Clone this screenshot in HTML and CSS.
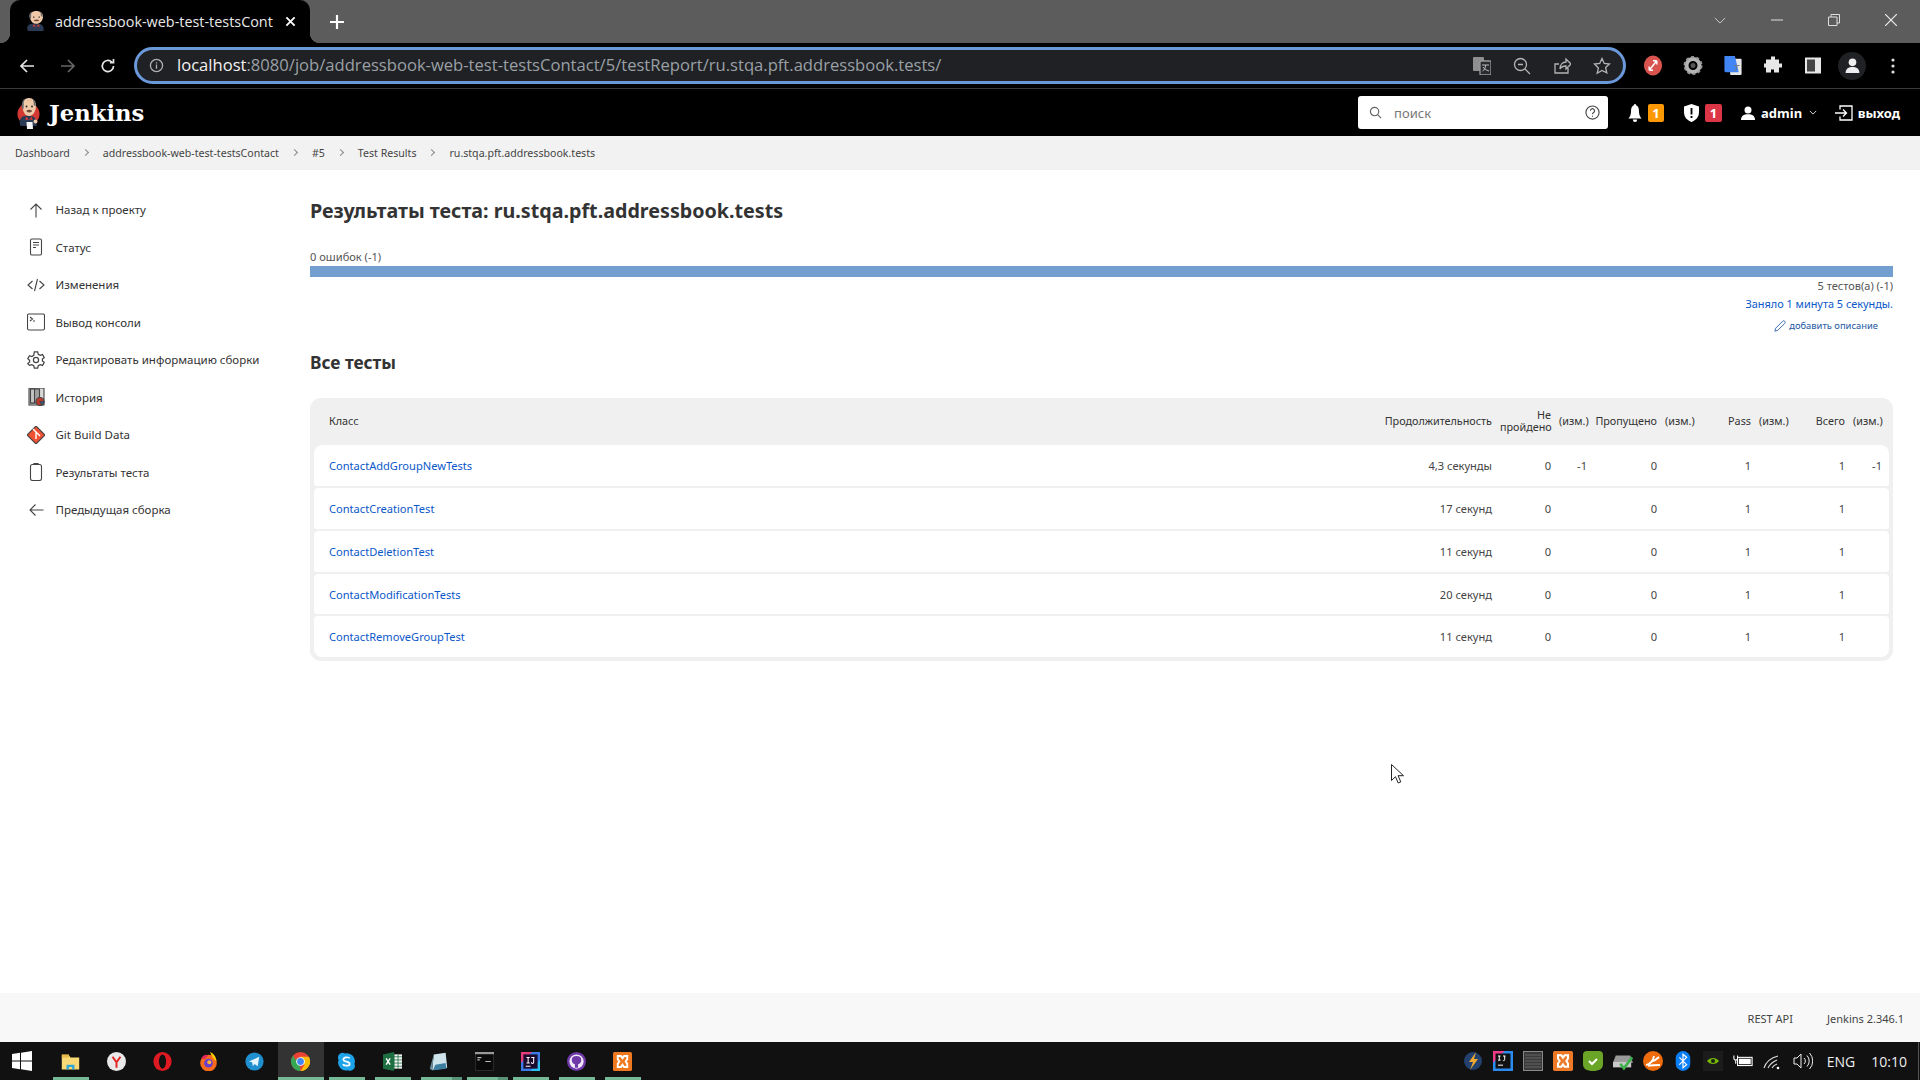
FILE: index.html
```html
<!DOCTYPE html>
<html lang="ru">
<head>
<meta charset="utf-8">
<title>addressbook-web-test-testsContact</title>
<link rel="stylesheet" href="styles.css">
</head>
<body>
<svg class="defs" width="0" height="0">
  <defs>
    <symbol id="butler" viewBox="0 0 23 32">
      <path d="M3.500 29C2 25 2.500 22 5 20c3-2 9-2 12 0 2.500 2 3 5 2.500 9z" fill="#2b3b55"/>
      <path d="M9 19.500l3 3 3-3 .5 3.500-3.500-.5-3.500.5z" fill="#d33833"/>
      <path d="M5.500 9.500C5 4 8 1 12 1s7 3 7 8c0 5-3 10-7 10s-6-4-6.500-9.500z" fill="#efc9a8"/>
      <path d="M5.500 12C4 8 5 3 8 1.800c-1 2-1.500 4-1.200 6.200l-.3 4zM18.500 9.500c.5-3-.5-6-3-7.500 1 2 1.500 4 1.200 6z" fill="#6f6c6e"/>
      <path d="M9 4c2-1.500 5-1.500 7 0-2-.5-5-.5-7 0z" fill="#e0b491"/>
      <path d="M9.500 13.500c1.500-1 4-1 5.500 0l-.5 1.500c-1.500.5-3 .5-4.500 0z" fill="#70483a"/>
      <circle cx="9.500" cy="9.500" r=".9" fill="#222"/><circle cx="15" cy="9.500" r=".9" fill="#222"/>
    </symbol>
  </defs>
</svg>

<div class="app">
  <div class="tabstrip">
    <div class="tab">
      <svg class="favicon" viewBox="2.500 1 17.500 28" preserveAspectRatio="none">
        <path d="M3.500 29C2 25 2.500 22 5 20c3-2 9-2 12 0 2.500 2 3 5 2.500 9z" fill="#2b3b55"/>
        <path d="M9 19.500l3 3 3-3 .5 3.500-3.500-.5-3.500.5z" fill="#d33833"/>
        <path d="M5.500 9.500C5 4 8 1 12 1s7 3 7 8c0 5-3 10-7 10s-6-4-6.500-9.500z" fill="#efc9a8"/>
        <path d="M5.500 12C4 8 5 3 8 1.800c-1 2-1.500 4-1.200 6.200l-.3 4zM18.500 9.500c.5-3-.5-6-3-7.500 1 2 1.500 4 1.200 6z" fill="#6f6c6e"/>
        <path d="M9.500 13.500c1.500-1 4-1 5.500 0l-.5 1.500c-1.500.5-3 .5-4.500 0z" fill="#70483a"/>
        <circle cx="9.500" cy="9.500" r=".9" fill="#222"/><circle cx="15" cy="9.500" r=".9" fill="#222"/>
      </svg>
      <span class="tab-title">addressbook-web-test-testsCont</span>
      <svg class="tab-x" viewBox="0 0 12 12"><path d="M1.500 1.500l9 9M10.500 1.500l-9 9"/></svg>
    </div>
    <svg class="tab-new" viewBox="0 0 14 14"><path d="M7 0v14M0 7h14"/></svg>
    <div class="win-controls">
      <svg class="wc wc-drop" viewBox="0 0 14 8"><path d="M1 1l6 6 6-6"/></svg>
      <svg class="wc wc-min" viewBox="0 0 12 12"><path d="M0 6h12"/></svg>
      <svg class="wc wc-max" viewBox="0 0 12 12"><path d="M.5 3h8.500v8.500H.5zM3 3V.5h8.500V9H9"/></svg>
      <svg class="wc wc-close" viewBox="0 0 12 12"><path d="M0 0l12 12M12 0L0 12"/></svg>
    </div>
  </div>

  <div class="toolbar">
    <div class="nav-btns">
      <svg class="nav" viewBox="0 0 16 16"><path d="M15 8H2M8 2L2 8l6 6"/></svg>
      <svg class="nav nav-off" viewBox="0 0 16 16"><path d="M1 8h13M8 2l6 6-6 6"/></svg>
      <svg class="nav" viewBox="0 0 16 16"><path d="M13.500 8a5.600 5.600 0 1 1-1.700-4M13.500 1v3.600H9.900"/></svg>
    </div>
    <div class="omnibox">
      <svg class="info" viewBox="0 0 16 16"><circle cx="8" cy="8" r="6.500"/><path d="M8 7v4.500M8 4.500v1.300"/></svg>
      <span class="url"><span class="host">localhost</span>:8080/job/addressbook-web-test-testsContact/5/testReport/ru.stqa.pft.addressbook.tests/</span>
      <div class="omni-actions">
        <svg class="oa" viewBox="0 0 18 18"><rect x="0" y="0" width="11" height="14" rx="1" fill="#8f8f8f" stroke="none"/><rect x="7" y="4" width="11" height="14" rx="1" fill="#2a2b2e" stroke="#9a9a9a"/><path d="M9 8h7M12.500 8c0 3-1 5-3 6M10 10c1 2 3 3 6 4" stroke="#bbb" stroke-width="1"/></svg>
        <svg class="oa" viewBox="0 0 18 18"><circle cx="7.500" cy="7.500" r="6"/><path d="M5 7.500h5M12 12l5 5"/></svg>
        <svg class="oa" viewBox="0 0 18 18"><path d="M15 11v5H2V7h4M7 12c0-5 3-7 6-7V2l5 5-5 5V9c-3 0-5 1-6 3z"/></svg>
        <svg class="oa" viewBox="0 0 18 18"><path d="M9 1.500l2.300 5 5.200.5-3.900 3.500 1.200 5.300L9 13.500l-4.800 2.800 1.200-5.300L1.500 7l5.200-.5z"/></svg>
      </div>
    </div>
    <div class="extensions">
      <svg class="ext" viewBox="0 0 20 22"><ellipse cx="10" cy="11" rx="9.500" ry="10.500" fill="#d9534f"/><path d="M6 16L14 6M14 6h-4M14 6v4M6 16h4M6 16v-4" stroke="#fff" stroke-width="1.500" fill="none"/></svg>
      <svg class="ext" viewBox="0 0 20 20"><circle cx="10" cy="10" r="6.500" fill="none" stroke="#b5b5b5" stroke-width="4"/><circle cx="10" cy="10" r="8.500" fill="none" stroke="#9a9a9a" stroke-width="2" stroke-dasharray="3 2.400"/><circle cx="10" cy="10" r="2.500" fill="#555"/></svg>
      <svg class="ext" viewBox="0 0 20 22"><rect x="7" y="4" width="12" height="17" rx="1" fill="#e8e8e8"/><path d="M1 1h11l4 17H2.500A1.500 1.500 0 0 1 1 16.500z" fill="#4285f4"/><path d="M11 11h6M14 11c0 3-1 5-3 6" stroke="#777" fill="none"/></svg>
      <svg class="ext" viewBox="0 0 20 20"><path d="M8 1h4v3h4v4h3v4h-3v5h-5v-3H8v3H3v-5H1V8h2V4h5z" fill="#e8e8e8"/></svg>
      <svg class="ext" viewBox="0 0 20 20"><path d="M2 2h16v16H2z" fill="#e8e8e8"/><rect x="4" y="4" width="8" height="12" fill="#444"/></svg>
      <span class="avatar"><svg viewBox="0 0 16 16"><circle cx="8" cy="5" r="3.600" fill="#eee"/><path d="M1.500 15c0-4 3-5.500 6.500-5.500s6.500 1.500 6.500 5.500z" fill="#eee"/></svg></span>
      <svg class="kebab" viewBox="0 0 4 16"><circle cx="2" cy="2" r="1.600"/><circle cx="2" cy="8" r="1.600"/><circle cx="2" cy="14" r="1.600"/></svg>
    </div>
  </div>

  <header class="jk-header">
    <div class="brand">
      <svg class="brand-logo" viewBox="0 0 23 32">
        <circle cx="11.500" cy="17" r="11" fill="#d33833"/>
        <use href="#butler"/>
        <path d="M9.500 25h6l.5 7H10z" fill="#f5f5f5"/>
        <circle cx="18.500" cy="24.500" r="2" fill="#efc9a8"/>
      </svg>
      <span class="brand-name">Jenkins</span>
    </div>
    <div class="jk-right">
      <div class="search">
        <svg class="search-ic" viewBox="0 0 14 14"><circle cx="6" cy="6" r="4.500"/><path d="M9.500 9.500L13 13"/></svg>
        <span class="search-ph">поиск</span>
        <svg class="search-help" viewBox="0 0 16 16"><circle cx="8" cy="8" r="7"/><path d="M5.800 6.200a2.200 2.200 0 1 1 3.400 1.800c-.8.500-1.200 1-1.200 1.800M8 11.500v1"/></svg>
      </div>
      <div class="hd-item hd-bell">
        <svg class="hd-ic" viewBox="0 0 16 18" preserveAspectRatio="none"><path d="M8 0a1.200 1.200 0 0 1 1.200 1.300C11.500 2 12.500 4 12.500 6.500c0 4 1 6 3 8H.5c2-2 3-4 3-8C3.500 4 4.500 2 6.800 1.300A1.200 1.200 0 0 1 8 0zM5.500 15.500h5a2.500 2.500 0 0 1-5 0z"/></svg>
        <span class="badge badge-warn">1</span>
      </div>
      <div class="hd-item hd-shield">
        <svg class="hd-ic hd-ic-s" viewBox="0 0 16 18" preserveAspectRatio="none"><path fill-rule="evenodd" d="M8 0l8 2.500V8c0 5-3 8-8 10-5-2-8-5-8-10V2.500zM7 4v6.500h2V4zM7 12v2h2v-2z"/></svg>
        <span class="badge badge-danger">1</span>
      </div>
      <div class="hd-item hd-user">
        <svg class="hd-ic hd-ic-u" viewBox="0 0 16 16" preserveAspectRatio="none"><circle cx="8" cy="4.500" r="4"/><path d="M0 16c0-4.500 3-6.500 8-6.500s8 2 8 6.500z"/></svg>
        <span class="hd-text">admin</span>
        <svg class="hd-caret" viewBox="0 0 10 6"><path d="M1 1l4 4 4-4"/></svg>
      </div>
      <div class="hd-item hd-exit">
        <svg class="hd-exit-ic" viewBox="0 0 18 16"><path d="M5 4.500V1h12v14H5v-3.500M0 8h11M8 4.500L11.500 8 8 11.500"/></svg>
        <span class="hd-text">выход</span>
      </div>
    </div>
  </header>

  <nav class="crumbs">
    <span>Dashboard</span><i></i>
    <span>addressbook-web-test-testsContact</span><i></i>
    <span>#5</span><i></i>
    <span>Test Results</span><i></i>
    <span>ru.stqa.pft.addressbook.tests</span>
  </nav>

  <div class="body-row">
    <aside class="side">
      <a class="side-item"><svg class="si" viewBox="0 0 18 18"><path d="M9 16.500V3M3.500 8.500L9 3l5.500 5.500"/></svg>Назад к проекту</a>
      <a class="side-item"><svg class="si" viewBox="0 0 18 18"><rect x="3.500" y="1" width="11" height="16" rx="1.500"/><path d="M6 4.500h6M6 7h6M6 9.500h3"/></svg>Статус</a>
      <a class="side-item"><svg class="si" viewBox="0 0 18 18"><path d="M5.500 5L1 9l4.500 4M12.500 5L17 9l-4.500 4M10.500 3l-3 12"/></svg>Изменения</a>
      <a class="side-item"><svg class="si" viewBox="0 0 18 18"><rect x=".5" y="1" width="17" height="16" rx="1.500"/><path d="M3 4l2.500 2L3 8M6 8h2"/></svg>Вывод консоли</a>
      <a class="side-item"><svg class="si" viewBox="0 0 16 16"><path d="M6.500.8h3l.5 2.100 1.700 1 2.100-.7 1.500 2.600-1.600 1.400v1.600l1.600 1.400-1.500 2.600-2.100-.7-1.700 1-.5 2.100h-3l-.5-2.100-1.700-1-2.100.7L.7 11.200l1.600-1.400V8.200L.7 6.800 2.200 4.200l2.100.7 1.700-1z"/><circle cx="8" cy="8" r="2.300"/></svg>Редактировать информацию сборки</a>
      <a class="side-item"><svg class="si si-fill" viewBox="0 0 18 18"><rect x="2" y="0" width="15" height="17" fill="#d8d8d8"/><rect x="3.500" y="1" width="9" height="14" fill="#a0a0a0"/><rect x="3.500" y="1" width="4" height="14" fill="#c4c4c4"/><circle cx="13" cy="13.500" r="4" fill="#c0392b"/><path d="M13 13.500h4a4 4 0 0 1-2.300 3.600z" fill="#3c5f9e"/></svg>История</a>
      <a class="side-item"><svg class="si si-fill" viewBox="0 0 18 18"><path d="M9 0l9 9-9 9-9-9z" fill="#f05133"/><path d="M6 3l3 3M9 6v7M9 6l4 4" stroke="#fff" stroke-width="1.400" fill="none"/></svg>Git Build Data</a>
      <a class="side-item"><svg class="si" viewBox="0 0 18 18"><rect x="3.500" y="1.500" width="11" height="16" rx="2"/><path d="M6.500 1.500C6.500.8 7 .5 7.500.5h3c.5 0 1 .3 1 1z"/></svg>Результаты теста</a>
      <a class="side-item"><svg class="si" viewBox="0 0 18 18"><path d="M16.500 9H3M8.500 3.500L3 9l5.500 5.500"/></svg>Предыдущая сборка</a>
    </aside>

    <main class="main">
      <h1 class="title">Результаты теста: ru.stqa.pft.addressbook.tests</h1>
      <div class="errors">0 ошибок (-1)</div>
      <div class="bar"></div>
      <div class="summary">
        <div>5 тестов(а) (-1)</div>
        <a class="took">Заняло 1 минута 5 секунды.</a>
        <a class="add-desc"><svg class="pen" viewBox="0 0 14 14"><path d="M1 13l1-3.500L10 1.500a1.700 1.700 0 0 1 2.500 2.500L4.500 12z"/></svg>добавить описание</a>
      </div>
      <h2 class="subtitle">Все тесты</h2>

      <div class="table-wrap">
        <table class="tests">
          <colgroup>
            <col><col class="c-dur"><col class="c-fail"><col class="c-faild"><col class="c-skip"><col class="c-skipd"><col class="c-pass"><col class="c-passd"><col class="c-tot"><col class="c-totd">
          </colgroup>
          <thead>
            <tr>
              <th class="name">Класс</th><th>Продолжительность</th><th>Не пройдено</th><th>(изм.)</th><th>Пропущено</th><th>(изм.)</th><th>Pass</th><th>(изм.)</th><th>Всего</th><th>(изм.)</th>
            </tr>
          </thead>
          <tbody>
            <tr><td class="name"><a>ContactAddGroupNewTests</a></td><td>4,3 секунды</td><td>0</td><td>-1</td><td>0</td><td></td><td>1</td><td></td><td>1</td><td>-1</td></tr>
            <tr><td class="name"><a>ContactCreationTest</a></td><td>17 секунд</td><td>0</td><td></td><td>0</td><td></td><td>1</td><td></td><td>1</td><td></td></tr>
            <tr><td class="name"><a>ContactDeletionTest</a></td><td>11 секунд</td><td>0</td><td></td><td>0</td><td></td><td>1</td><td></td><td>1</td><td></td></tr>
            <tr><td class="name"><a>ContactModificationTests</a></td><td>20 секунд</td><td>0</td><td></td><td>0</td><td></td><td>1</td><td></td><td>1</td><td></td></tr>
            <tr><td class="name"><a>ContactRemoveGroupTest</a></td><td>11 секунд</td><td>0</td><td></td><td>0</td><td></td><td>1</td><td></td><td>1</td><td></td></tr>
          </tbody>
        </table>
      </div>
    </main>
  </div>

  <footer class="footer">
    <span>REST API</span>
    <span>Jenkins 2.346.1</span>
  </footer>

  <div class="taskbar">
    <svg class="tb-start" viewBox="0 0 20 20"><path d="M0 3l8-1.200V9.500H0zM9 1.700L20 0v9.500H9zM0 10.500h8v7.700L0 17zM9 10.500h11V20L9 18.300z" fill="#fff"/></svg>
    <div class="tb-apps">
      <span class="tb-app on"><svg viewBox="0 0 24 24"><path d="M1 4h9l2 3h11v15H1z" fill="#f9d976"/><rect x="1" y="3" width="9" height="4" fill="#e8b94a"/><path d="M7 22v-6h10v6h-3v-3h-4v3z" fill="#2ea6d8"/></svg></span>
      <span class="tb-app"><svg viewBox="0 0 24 24"><circle cx="12" cy="12" r="12" fill="#e9e9e9"/><path d="M7 6l5 7 5-7M12 13v7" stroke="#e52620" stroke-width="2.500" fill="none"/></svg></span>
      <span class="tb-app"><svg viewBox="0 0 24 24"><ellipse cx="12" cy="12" rx="11.500" ry="12" fill="#e01a22"/><ellipse cx="12" cy="12" rx="4.500" ry="9" fill="#111"/></svg></span>
      <span class="tb-app"><svg viewBox="0 0 24 24"><circle cx="12" cy="14" r="10.500" fill="#f76b1c"/><path d="M3 8C5 4 9 2 12 5c-3 1-4 2-4 4z" fill="#e0245e"/><path d="M14 0c5 2 8 7 8 12-3-3-6-6-8-12z" fill="#ffcb00"/><circle cx="12" cy="14" r="5.500" fill="#6a3fd0"/><circle cx="13" cy="13" r="2.500" fill="#ffb638"/></svg></span>
      <span class="tb-app"><svg viewBox="0 0 24 24"><circle cx="12" cy="12" r="11.500" fill="#1f8fd0"/><path d="M5 12l13-6-2 12-4-3-2 3-1-5z" fill="#e8f4fb"/></svg></span>
      <span class="tb-app active on"><svg viewBox="0 0 24 24"><circle cx="12" cy="12" r="12" fill="#ea4335"/><path d="M12 24a12 12 0 0 1-10.400-6L7 8l5 10h-1z" fill="#34a853"/><path d="M12 6h10.500A12 12 0 0 1 12 24l5-8z" fill="#fbbc05"/><path d="M1.600 18A12 12 0 0 1 3 4.500L7.800 15z" fill="#34a853"/><circle cx="12" cy="12" r="5.500" fill="#fff"/><circle cx="12" cy="12" r="4.300" fill="#4285f4"/></svg></span>
      <span class="tb-app on"><svg viewBox="0 0 24 24"><path d="M7 1a6 6 0 0 0-5 9 10 10 0 0 0 12 13 6 6 0 0 0 8-8A10 10 0 0 0 10 2a6 6 0 0 0-3-1z" fill="#1da4e8"/><path d="M16 8c-1-2-8-2-8 1.500 0 3.500 8 2 8 5.500 0 3-7 3-8.500.5" stroke="#fff" stroke-width="2.200" fill="none"/></svg></span>
      <span class="tb-app on"><svg viewBox="0 0 24 24"><rect x="8" y="3" width="16" height="18" fill="#f2f2f2"/><path d="M8 6h16M8 10h16M8 14h16M8 18h16M14 3v18M19 3v18" stroke="#1d6f42"/><path d="M0 3l14-3v24L0 21z" fill="#1d6f42"/><path d="M4 8l5 8M9 8l-5 8" stroke="#fff" stroke-width="1.800"/></svg></span>
      <span class="tb-app on split"><svg viewBox="0 0 24 24"><path d="M6 3l15-2 2 19L4 23z" fill="#cfe3ea"/><path d="M6 3l-5 18 3 2z" fill="#6e8fa0"/><path d="M8 16l13-2 1 7L5 23z" fill="#3d7ea0"/></svg></span>
      <span class="tb-app on split"><svg viewBox="0 0 24 24"><rect width="24" height="24" rx="1" fill="#333"/><rect y="0" width="24" height="3" fill="#999"/><rect x="1" y="3" width="22" height="20" fill="#0a0a0a"/><path d="M3 7h5M3 10h3M13 12h7" stroke="#bbb" stroke-width="1.500"/></svg></span>
      <span class="tb-app on"><svg viewBox="0 0 24 24"><rect width="24" height="24" fill="#3a7be8"/><path d="M0 0h14L0 14z" fill="#e83c7d"/><path d="M24 24H12L24 10z" fill="#29c2f5"/><rect x="3" y="3" width="18" height="18" fill="#1a0b2e"/><path d="M7 7h4M9 7v7M7 14h4M13 7h4M16 7v6a1.500 1.500 0 0 1-3 0M6 18h6" stroke="#fff" stroke-width="1.300" fill="none"/></svg></span>
      <span class="tb-app on"><svg viewBox="0 0 24 24"><circle cx="12" cy="12" r="12" fill="#6f3aa8"/><circle cx="12" cy="12" r="9" fill="#f2eaf8"/><path d="M12 5c-4 0-6 2-6 5 0 3 2 5 4 5.500V20h4v-4.500c2-.5 4-2.500 4-5.500 0-3-2-5-6-5z" fill="#6f3aa8"/></svg></span>
      <span class="tb-app on"><svg viewBox="0 0 24 24"><rect width="24" height="24" rx="2" fill="#f0781e"/><path d="M6 5h4l2 3 2-3h4v4l-2 3 2 3v4h-4l-2-3-2 3H6v-4l2-3-2-3z" fill="none" stroke="#fff" stroke-width="2.400"/></svg></span>
    </div>
    <div class="tray">
      <svg class="tr" viewBox="0 0 20 20"><circle cx="10" cy="10" r="9" fill="#23406e"/><path d="M13 1L6 11h4l-3 8 8-11h-4z" fill="#f0a92e"/></svg>
      <svg class="tr" viewBox="0 0 24 24"><rect width="24" height="24" fill="#2b8cf0"/><path d="M0 0h14L0 14z" fill="#f03c8a"/><rect x="3" y="3" width="18" height="18" fill="#111"/><path d="M6 6h3M7.500 6v5M6 11h3M12 6h3M14 6v4a1 1 0 0 1-2 1M6 17h6" stroke="#fff" stroke-width="1.200" fill="none"/></svg>
      <svg class="tr" viewBox="0 0 20 20"><rect width="20" height="20" fill="#888"/><rect x="1" y="1" width="18" height="18" fill="#3a3a3a"/><path d="M2 4h16M2 7h16M2 10h16M2 13h16M2 16h16" stroke="#666"/></svg>
      <svg class="tr" viewBox="0 0 24 24"><rect width="24" height="24" rx="2" fill="#ee7a28"/><path d="M6 5h4l2 3 2-3h4v4l-2 3 2 3v4h-4l-2-3-2 3H6v-4l2-3-2-3z" fill="none" stroke="#fff" stroke-width="2.400"/></svg>
      <svg class="tr" viewBox="0 0 20 20"><path d="M4 0h12a4 4 0 0 1 4 4v9c0 5-4 7-10 7S0 18 0 13V4a4 4 0 0 1 4-4z" fill="#6aa527"/><path d="M6 10l3 3 5-5" stroke="#fff" stroke-width="2" fill="none"/></svg>
      <svg class="tr" viewBox="0 0 22 20"><path d="M3 4h16l3 8H0z" fill="#9b9b9b"/><rect y="11" width="20" height="6" fill="#c9c9c9"/><path d="M8 13l4 5 9-12" stroke="#3fb24b" stroke-width="3" fill="none"/></svg>
      <svg class="tr" viewBox="0 0 20 20"><circle cx="10" cy="10" r="10" fill="#ef6c0c"/><path d="M3 14c4-1 7-3 8-9M5 15c4-1 8-1 12-1M8 11c3-1 6-3 8-5" stroke="#fff" stroke-width="1.800" fill="none"/></svg>
      <svg class="tr" viewBox="0 0 16 22"><rect width="16" height="22" rx="8" fill="#0a7ff5"/><path d="M4 7l8 8-4 3.500V3.500l4 3.500-8 8" stroke="#fff" stroke-width="1.300" fill="none"/></svg>
      <svg class="tr" viewBox="0 0 20 20"><rect width="20" height="20" fill="#1c1c1c"/><path d="M4 10c3-4 9-4 12 0-3 4-9 4-12 0z" fill="#76b900"/><circle cx="10" cy="10" r="2" fill="#1c1c1c"/></svg>
      <svg class="tr" viewBox="0 0 22 14"><rect x="5" y="3" width="16" height="9" fill="none" stroke="#fff" stroke-width="1.200"/><rect x="6.500" y="4.500" width="13" height="6" fill="#fff"/><path d="M1 1v3a2 2 0 0 0 4 0V1M3 6v4" stroke="#fff" stroke-width="1.200" fill="none"/></svg>
      <svg class="tr" viewBox="0 0 20 18"><path d="M1 16c2-6 6-10 14-12M5 16c2-4 4-6 9-8M9 16c1-2 2-3 5-4" stroke="#ddd" stroke-width="1.100" fill="none"/><circle cx="15" cy="16" r="1.300" fill="#fff"/></svg>
      <svg class="tr" viewBox="0 0 20 18"><path d="M1 6h3l4-4v14l-4-4H1zM11 6a4 4 0 0 1 0 6M14 3.500a8 8 0 0 1 0 11M16.500 1a11.500 11.500 0 0 1 0 16" stroke="#eee" fill="none"/></svg>
      <span class="tr-text lang">ENG</span>
      <span class="tr-text clock">10:10</span>
      <span class="show-desktop"></span>
    </div>
  </div>

  <svg class="cursor" viewBox="0 0 13 20"><path d="M.5.500v16l4-3.800 2.700 6.300 2.600-1.100-2.700-6.200h5.400z"/></svg>
</div>
</body>
</html>
```

FILE: styles.css
```css
* { box-sizing: border-box; }
html, body { margin: 0; padding: 0; height: 100%; }
body { font-family: "Noto Sans", "Open Sans", sans-serif; color: #333; background: #fff; overflow: hidden; }
.defs { position: absolute; }
svg { display: block; flex: none; }
.app { position: relative; width: 1920px; height: 1080px; display: flex; flex-direction: column; }
.cursor { position: absolute; left: 1391px; top: 764px; width: 13px; height: 20px; fill: #fff; stroke: #222; stroke-width: 1; }

/* Browser tab strip */
.tabstrip { height: 43px; background: #5c5c5c; display: flex; align-items: flex-end; padding-left: 10px; }
.tab { position: relative; width: 300px; height: 43px; background: #000; border-radius: 10px 10px 0 0; display: flex; align-items: center; padding: 0 0 0 17px; }
.tab::before, .tab::after { content: ""; position: absolute; bottom: 0; width: 10px; height: 10px; }
.tab::before { left: -10px; background: radial-gradient(circle at 0 0, transparent 10px, #000 10.500px); }
.tab::after { right: -10px; background: radial-gradient(circle at 100% 0, transparent 10px, #000 10.500px); }
.favicon { width: 17px; height: 20px; margin: 0 11px 2px 0; }
.tab-title { width: 219px; font: 14.400px "Open Sans", sans-serif; color: #e8e8e8; white-space: nowrap; }
.tab-x { width: 11px; height: 11px; margin-left: 11px; fill: none; stroke: #fff; stroke-width: 2; }
.tab-new { width: 14px; height: 14px; margin: 0 0 14px 20px; fill: none; stroke: #fff; stroke-width: 2.200; }
.win-controls { margin-left: auto; align-self: stretch; display: flex; align-items: center; padding-bottom: 3px; }
.wc { fill: none; stroke: #ddd; stroke-width: 1; }
.wc-drop { width: 12px; height: 7px; margin-right: 45px; }
.wc-min { width: 12px; height: 12px; margin-right: 45px; }
.wc-max { width: 12px; height: 12px; margin-right: 45px; }
.wc-close { width: 12px; height: 12px; margin-right: 23px; stroke-width: 1.200; stroke: #eee; }

/* Browser toolbar */
.toolbar { height: 46px; background: #000; border-bottom: 1px solid #3a3a3a; display: flex; align-items: center; padding-left: 19px; }
.nav-btns { display: flex; gap: 24.500px; width: 116px; }
.nav { width: 16px; height: 16px; fill: none; stroke: #e6e6e6; stroke-width: 1.700; }
.nav-off { stroke: #666; }
.omnibox { width: 1492px; height: 37px; margin-left: -1px; background: #202124; border: 3px solid #6b98d8; border-radius: 19px; display: flex; align-items: center; padding-left: 12px; }
.info { width: 15px; height: 15px; fill: none; stroke: #b0b0b0; stroke-width: 1.400; }
.url { margin: 0 0 0 13px; font: 16.600px/1 "Open Sans", sans-serif; color: #9aa0a6; white-space: nowrap; }
.host { color: #f2f2f2; }
.omni-actions { margin-left: auto; display: flex; gap: 22px; padding-right: 12px; }
.oa { width: 18px; height: 18px; fill: none; stroke: #b4b4b4; stroke-width: 1.300; }
.extensions { display: flex; align-items: center; margin-left: 17px; gap: 20px; }
.ext { width: 20px; height: 21px; }
.avatar { width: 28px; height: 28px; border-radius: 50%; background: #202124; display: flex; align-items: center; justify-content: center; margin: 0 4.500px 0 -5px; }
.avatar svg { width: 17px; height: 17px; }
.kebab { width: 4px; height: 16px; fill: #ddd; }

/* Jenkins header */
.jk-header { height: 47px; background: #000; display: flex; align-items: center; padding: 0 20px 0 17px; }
.brand { display: flex; align-items: center; }
.brand-logo { width: 23px; height: 32px; }
.brand-name { font: 700 22.700px "DejaVu Serif", serif; color: #fff; margin-left: 9px; }
.jk-right { margin-left: auto; display: flex; align-items: center; }
.search { width: 250px; height: 33px; background: #fff; border-radius: 3px; display: flex; align-items: center; padding: 0 8px 0 11px; }
.search-ic { width: 13px; height: 13px; fill: none; stroke: #666; stroke-width: 1.300; }
.search-ph { margin-left: 12px; font-size: 13px; color: #777; }
.search-help { margin-left: auto; width: 15px; height: 15px; fill: none; stroke: #444; stroke-width: 1.200; }
.hd-item { display: flex; align-items: center; color: #fff; }
.hd-ic { width: 14px; height: 18px; fill: #fff; }
.hd-ic-s { width: 15px; }
.hd-ic-u { height: 14px; }
.badge { width: 16px; height: 18px; border-radius: 2px; color: #fff; font-size: 13px; font-weight: 700; display: flex; align-items: center; justify-content: center; margin-left: 6px; }
.badge-warn { background: #fe9800; }
.badge-danger { width: 17px; background: #dc3545; }
.hd-bell { margin-left: 20px; }
.hd-shield { margin-left: 20px; }
.hd-user { margin-left: 19px; }
.hd-text { font-size: 13px; font-weight: 700; margin-left: 6px; }
.hd-caret { width: 8px; height: 5px; margin-left: 6.600px; fill: none; stroke: #ddd; stroke-width: 1.200; }
.hd-exit { margin-left: 18.600px; }
.hd-exit-ic { width: 18px; height: 16px; fill: none; stroke: #fff; stroke-width: 1.300; }
.hd-exit .hd-text { margin-left: 4.400px; }

/* Breadcrumbs */
.crumbs { height: 34px; background: #f2f2f2; display: flex; align-items: center; padding: 0 0 1px 15px; font-size: 10.600px; color: #444; }
.crumbs i { width: 5px; height: 5px; border-top: 1px solid #888; border-right: 1px solid #888; transform: rotate(45deg); margin: 0 15px 0 13px; }

/* Body */
.body-row { flex: 1; display: flex; min-height: 0; }
.side { width: 310px; flex: none; padding: 21px 0 0 27px; display: flex; flex-direction: column; }
.side-item { height: 37.500px; display: flex; align-items: center; font-size: 11.500px; color: #333; white-space: nowrap; }
.si { width: 18px; height: 18px; margin-right: 10.500px; fill: none; stroke: #444; stroke-width: 1.100; }

.main { flex: 1; padding: 0 27px 0 0; min-width: 0; }
.title { margin: 27px 0 0; height: 28px; font-size: 19.700px; line-height: 28px; font-weight: 700; color: #333; }
.errors { margin-top: 23.500px; font-size: 11.100px; line-height: 16px; color: #555; height: 17px; }
.bar { height: 11px; background: #729fcf; }
.summary { text-align: right; font-size: 11px; color: #555; line-height: 18px; display: flex; flex-direction: column; align-items: flex-end; }
.summary > div { margin-top: 0; }
.took { color: #0b57c9; font-size: 10.900px; }
.add-desc { color: #2257a5; font-size: 9.400px; display: flex; align-items: center; margin: 4px 15px 0 0; }
.pen { width: 12px; height: 12px; fill: none; stroke: #2257a5; margin-right: 3px; }
.subtitle { margin: 14.400px 0 0; height: 28px; font-size: 17.300px; line-height: 28px; font-weight: 700; color: #333; }

.table-wrap { margin-top: 21.500px; background: #f0f0f0; border-radius: 11px; padding: 0 4px 4px; }
.tests { width: 100%; table-layout: fixed; border-collapse: separate; border-spacing: 0; font-size: 11.100px; color: #444; }
.c-dur { width: 130px; } .c-fail { width: 59px; } .c-faild { width: 36px; } .c-skip { width: 70px; } .c-skipd { width: 37px; }
.c-pass { width: 57px; } .c-passd { width: 37px; } .c-tot { width: 57px; } .c-totd { width: 40px; }
.tests th { height: 47px; padding: 0 4px 2px; text-align: right; font-weight: 400; font-size: 10.800px; line-height: 12px; color: #333; }
.tests th:last-child, .tests td:last-child { padding-right: 7px; }
.tests td { height: 42.750px; padding: 0 4px; text-align: right; background: #fff; background-clip: padding-box; border-bottom: 2px solid transparent; }
.tests tbody tr:last-child td { border-bottom: 0; height: 40.750px; }
.tests .name { text-align: left; padding-left: 15px; }
.tests a { color: #0b57c9; }
.tests tbody td:first-child { border-radius: 4px 0 0 4px; }
.tests tbody td:last-child { border-radius: 0 4px 4px 0; }
.tests tbody tr:first-child td:first-child { border-top-left-radius: 8px; }
.tests tbody tr:first-child td:last-child { border-top-right-radius: 8px; }
.tests tbody tr:last-child td:first-child { border-bottom-left-radius: 8px; }
.tests tbody tr:last-child td:last-child { border-bottom-right-radius: 8px; }

/* Footer */
.footer { height: 49px; background: #f8f8f8; display: flex; justify-content: flex-end; align-items: center; gap: 34px; padding: 2px 16px 0 0; font-size: 11px; color: #444; }

/* Taskbar */
.taskbar { height: 38px; background: #111; display: flex; align-items: center; padding-left: 12px; }
.tb-start { width: 20px; height: 20px; }
.tb-apps { display: flex; margin-left: 15.500px; height: 38px; align-items: stretch; }
.tb-app { width: 46px; display: flex; align-items: center; justify-content: center; position: relative; }
.tb-app svg { width: 19px; height: 19px; }
.tb-app.active { background: #333; }
.tb-app.on::after { content: ""; position: absolute; left: 5px; right: 5px; bottom: 0; height: 3px; background: #76b996; }
.tb-app.active::after { left: 0; right: 0; }
.tb-app.split::after { right: 0; background: linear-gradient(90deg, #76b996 75%, #5a9478 75%); }
.tray { margin-left: auto; display: flex; align-items: center; height: 38px; }
.tr { width: 20px; height: 20px; margin-right: 10px; }
.tr-text { color: #eee; font: 14px "Open Sans", sans-serif; }
.lang { margin: 0 16px 0 4px; }
.clock { margin-right: 6px; }
.show-desktop { width: 1px; height: 38px; background: #555; margin-right: 1px; margin-left: 5px; }
```
